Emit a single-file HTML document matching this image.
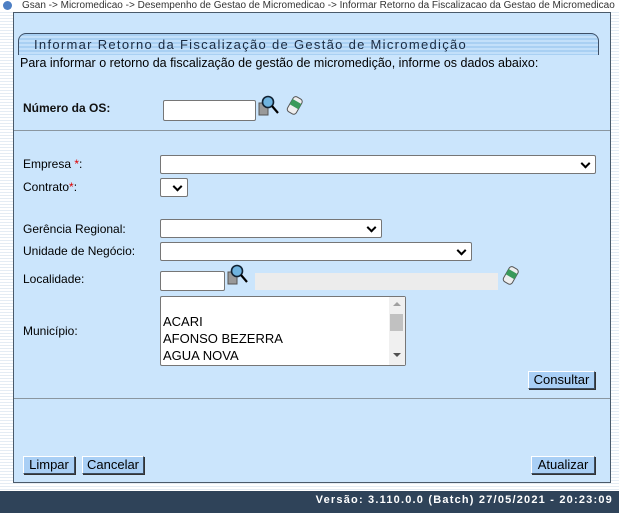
<!DOCTYPE html>
<html><head><meta charset="utf-8"><style>
*{box-sizing:border-box}
body{margin:0;width:619px;height:513px;overflow:hidden;font-family:"Liberation Sans",Arial,sans-serif;font-size:12px;color:#000;
background:repeating-linear-gradient(#e4ecf4 0 1px,#fff 1px 3px);position:relative}
.a{position:absolute}
.panel{left:13px;top:12px;width:598px;height:471px;background:#cbe5fc;border:1px solid #4a5a6a}
.lbl{font-weight:bold;color:#111}
.in{background:#fff;border:1px solid #767676;border-radius:2px}
.sel{background:#fff;border:1px solid #767676;border-radius:2px}
.sel:after{content:"";position:absolute;right:6px;top:50%;width:5px;height:5px;border-right:2px solid #000;border-bottom:2px solid #000;transform:translateY(-70%) rotate(45deg)}
.btn{background:#a9cff5;border:1px solid #3c4d60;border-top-color:#fff;border-left-color:#fff;box-shadow:1px 1px 0 #333;font-size:13px;text-align:center;line-height:16px;height:18px}
hr{position:absolute;margin:0;border:0;border-top:1px solid #8a96a0;height:0}
.req{color:#d00}
</style></head><body>
<div class="a" style="left:0;top:0;width:619px;height:11px;background:#fff"></div>
<div class="a" style="left:3px;top:1px;width:9px;height:9px;border-radius:50%;background:#4d7fc4"></div>
<div class="a" style="left:22px;top:0px;font-size:10px;line-height:11px;color:#333;white-space:nowrap">Gsan -&gt; Micromedicao -&gt; Desempenho de Gestao de Micromedicao -&gt; Informar Retorno da Fiscalizacao da Gestao de Micromedicao</div>
<div class="a panel"></div>
<div class="a" style="left:18px;top:33px;width:581px;height:22px;border:1px solid #3d4f66;border-bottom:none;border-radius:8px 8px 0 0;background:repeating-linear-gradient(#a9d0f3 0 2px,#c3e0fa 2px 4px)"></div>
<div class="a" style="left:34px;top:37px;font-size:13px;letter-spacing:1.3px;color:#1a2a40">Informar Retorno da Fiscalização de Gestão de Micromedição</div>
<div class="a" style="left:20px;top:56px;font-size:12.5px">Para informar o retorno da fiscalização de gestão de micromedição, informe os dados abaixo:</div>

<div class="a lbl" style="left:23px;top:101px">Número da OS:</div>
<div class="a in" style="left:163px;top:100px;width:93px;height:21px"></div>
<svg class="a" style="left:258px;top:95px" width="48" height="24" viewBox="0 0 48 24"><rect x="1" y="8" width="9" height="12" fill="#999" stroke="#555"/><circle cx="10" cy="7" r="5.5" fill="#6fb3df" stroke="#123" stroke-width="1.6"/><line x1="14" y1="11" x2="20" y2="18" stroke="#000" stroke-width="2.2"/><g transform="rotate(30 37 10)"><rect x="32" y="2" width="10" height="17" rx="3" fill="#eee" stroke="#555"/><rect x="32" y="6" width="10" height="6" fill="#3a9a5a"/></g></svg>
<hr style="left:14px;top:130px;width:596px">

<div class="a" style="left:23px;top:157px">Empresa <span class="req">*</span>:</div>
<div class="a sel" style="left:160px;top:155px;width:436px;height:19px"></div>
<div class="a" style="left:23px;top:180px">Contrato<span class="req">*</span>:</div>
<div class="a sel" style="left:160px;top:178px;width:28px;height:19px"></div>

<div class="a" style="left:23px;top:222px">Gerência Regional:</div>
<div class="a sel" style="left:160px;top:219px;width:222px;height:19px"></div>
<div class="a" style="left:23px;top:244px">Unidade de Negócio:</div>
<div class="a sel" style="left:160px;top:242px;width:312px;height:19px"></div>
<div class="a" style="left:23px;top:272px">Localidade:</div>
<div class="a in" style="left:160px;top:271px;width:65px;height:20px"></div>
<svg class="a" style="left:227px;top:264px" width="24" height="24" viewBox="0 0 24 24"><rect x="1" y="8" width="9" height="12" fill="#999" stroke="#555"/><circle cx="10" cy="7" r="5.5" fill="#6fb3df" stroke="#123" stroke-width="1.6"/><line x1="14" y1="11" x2="20" y2="18" stroke="#000" stroke-width="2.2"/></svg>
<div class="a" style="left:255px;top:273px;width:243px;height:17px;background:#ececec"></div>
<svg class="a" style="left:501px;top:265px" width="20" height="22" viewBox="0 0 20 22"><g transform="rotate(30 10 10)"><rect x="5" y="2" width="10" height="17" rx="3" fill="#eee" stroke="#555"/><rect x="5" y="6" width="10" height="6" fill="#3a9a5a"/></g></svg>

<div class="a" style="left:23px;top:324px">Município:</div>
<div class="a in" style="left:160px;top:296px;width:246px;height:70px;overflow:hidden;font-size:13px;line-height:17px;padding:16px 0 0 2px">ACARI<br>AFONSO BEZERRA<br>AGUA NOVA</div>
<div class="a" style="left:389px;top:297px;width:16px;height:68px;background:#f0f0f0"></div>
<div class="a" style="left:390px;top:314px;width:13px;height:17px;background:#c1c1c1"></div>
<div class="a" style="left:393px;top:302px;border:4px solid transparent;border-bottom-color:#a0a0a0;border-top:0"></div>
<div class="a" style="left:393px;top:353px;border:4px solid transparent;border-top-color:#505050;border-bottom:0"></div>

<div class="a btn" style="left:528px;top:371px;width:67px">Consultar</div>
<hr style="left:14px;top:398px;width:596px">

<div class="a btn" style="left:23px;top:456px;width:52px">Limpar</div>
<div class="a btn" style="left:82px;top:456px;width:62px">Cancelar</div>
<div class="a btn" style="left:531px;top:456px;width:64px">Atualizar</div>

<div class="a" style="left:0;top:491px;width:619px;height:22px;background:#2f4359"></div>
<div class="a" style="right:6px;top:494px;color:#fff;font-weight:bold;font-size:11px;letter-spacing:1.2px">Versão: 3.110.0.0 (Batch) 27/05/2021 - 20:23:09</div>
</body></html>
